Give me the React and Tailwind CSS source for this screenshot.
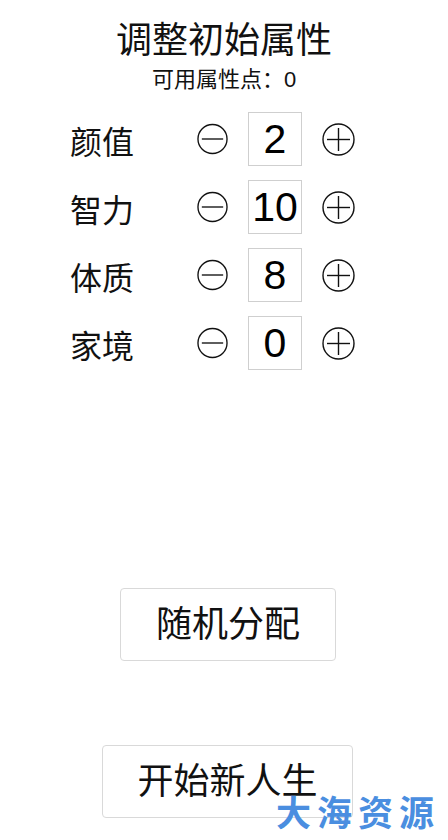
import React, { useState } from 'react';

const FONT = "font-['Liberation_Sans','Noto_Sans_CJK_SC',sans-serif]";

const MinusIcon = () => (
  <svg width="32" height="32" viewBox="0 0 32 32" fill="none" stroke="#111" strokeWidth="1.4">
    <circle cx="16" cy="16" r="15" />
    <line x1="5" y1="16" x2="27" y2="16" />
  </svg>
);

const PlusIcon = () => (
  <svg width="33" height="33" viewBox="0 0 33 33" fill="none" stroke="#111" strokeWidth="1.4">
    <circle cx="16.5" cy="16.5" r="15.5" />
    <line x1="5" y1="16.5" x2="28" y2="16.5" />
    <line x1="16.5" y1="5" x2="16.5" y2="28" />
  </svg>
);

const StatRow = ({ label, value, onDec, onInc }) => (
  <div className="flex items-center h-[68px]">
    <div className="w-[127px] text-[32px] leading-none pt-[8px] text-[#111]">{label}</div>
    <button onClick={onDec} className="w-[31px] flex items-center justify-center">
      <MinusIcon />
    </button>
    <div className="ml-[20px] w-[54px] h-[54px] border border-[#cfcfcf] flex items-center justify-center text-[41px] leading-none text-black overflow-hidden">
      {value}
    </div>
    <button onClick={onInc} className="ml-[20px] w-[33px] flex items-center justify-center">
      <PlusIcon />
    </button>
  </div>
);

export default function App() {
  const [stats, setStats] = useState([
    { key: 'looks', label: '颜值', value: 2 },
    { key: 'mind', label: '智力', value: 10 },
    { key: 'body', label: '体质', value: 8 },
    { key: 'family', label: '家境', value: 0 },
  ]);

  const change = (i, d) =>
    setStats(prev => prev.map((s, j) => (j === i ? { ...s, value: Math.max(0, s.value + d) } : s)));

  return (
    <div className={`relative w-[448px] h-[840px] bg-white overflow-hidden ${FONT}`}>
      {/* header */}
      <div className="flex flex-col items-center pt-[22px]">
        <h1 className="text-[36px] leading-[38px] text-[#111]">调整初始属性</h1>
        <div className="text-[22px] leading-[26px] mt-[7px] text-[#111]">可用属性点：0</div>
      </div>

      {/* attribute rows */}
      <div className="pl-[70px] mt-[12px]">
        {stats.map((s, i) => (
          <StatRow
            key={s.key}
            label={s.label}
            value={s.value}
            onDec={() => change(i, -1)}
            onInc={() => change(i, 1)}
          />
        ))}
      </div>

      {/* actions */}
      <div className="flex flex-col items-center mt-[211px]">
        <button className="w-[216px] h-[73px] border border-[#d9d9d9] rounded-[4px] text-[36px] leading-none text-[#111] ml-[8px]">
          随机分配
        </button>
        <button className="w-[251px] h-[73px] mt-[84px] border border-[#d9d9d9] rounded-[4px] text-[36px] leading-none text-[#111] ml-[7px]">
          开始新人生
        </button>
      </div>

      {/* site mark */}
      <div className="absolute left-[276px] top-[792px] text-[35px] leading-[44px] font-bold tracking-[6px] text-[#4a8ee0]">
        大海资源
      </div>
    </div>
  );
}
